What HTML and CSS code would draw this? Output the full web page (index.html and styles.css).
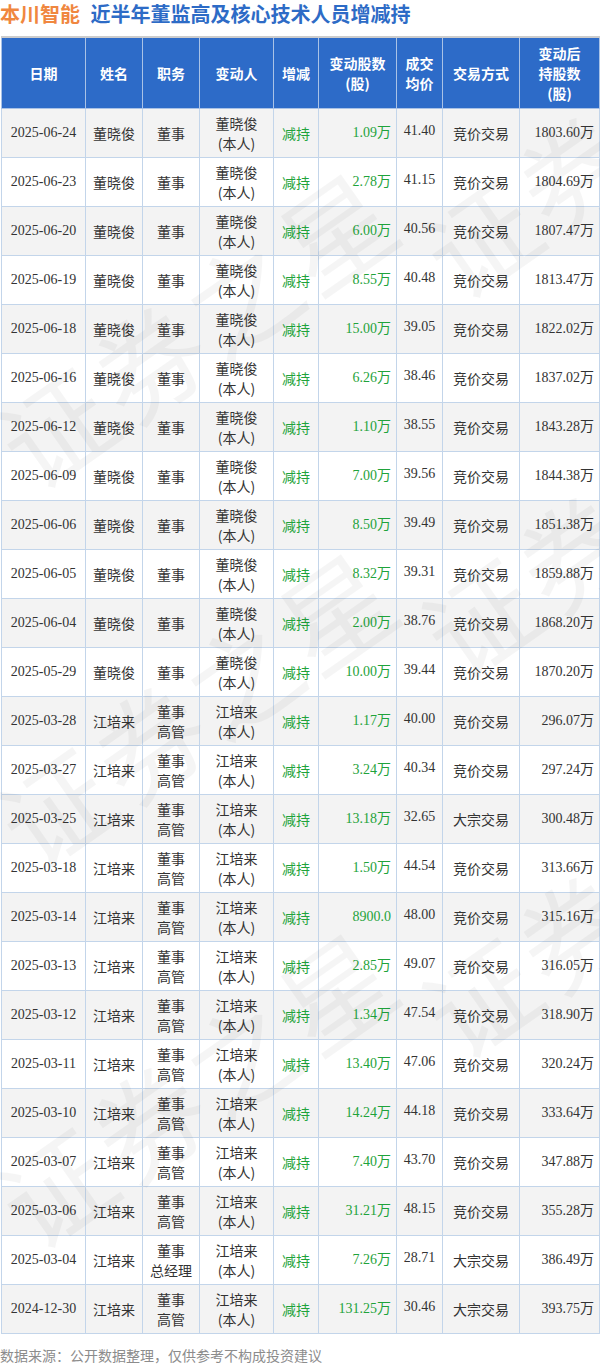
FILE: index.html
```html
<!DOCTYPE html>
<html lang="zh-CN">
<head>
    <meta charset="UTF-8">
    <meta name="viewport" content="width=device-width, initial-scale=1.0">
    <title>本川智能 近半年董监高及核心技术人员增减持</title>
    <link rel="stylesheet" href="styles.css">
</head>
<body>
    <div class="page">
        <div class="title">
            <span class="stock">本川智能</span>
            <span class="topic">近半年董监高及核心技术人员增减持</span>
        </div>

        <table class="trades">
            <colgroup>
                <col class="c-date">
                <col class="c-name">
                <col class="c-role">
                <col class="c-who">
                <col class="c-dir">
                <col class="c-qty">
                <col class="c-price">
                <col class="c-way">
                <col class="c-hold">
            </colgroup>
            <thead>
                <tr>
                    <th>日期</th>
                    <th>姓名</th>
                    <th>职务</th>
                    <th>变动人</th>
                    <th>增减</th>
                    <th>变动股数<br>(股)</th>
                    <th>成交<br>均价</th>
                    <th>交易方式</th>
                    <th>变动后<br>持股数<br>(股)</th>
                </tr>
            </thead>
            <tbody id="rows"></tbody>
        </table>

        <div class="source">数据来源：公开数据整理，仅供参考不构成投资建议</div>

        <!-- 水印 -->
        <div class="watermark">
            <span class="mark m1">证券之星</span>
            <span class="mark m2">证券之星</span>
            <span class="mark m3">证券之星</span>
            <span class="mark m4">证券之星</span>
            <span class="mark m5">证券之星</span>
            <span class="mark m6">证券之星</span>
        </div>
    </div>

    <script>
        // 日期, 姓名, 职务, 变动股数, 成交均价, 交易方式, 变动后持股数
        const data = [
            ['2025-06-24', '董晓俊', '董事', '1.09万', '41.40', '竞价交易', '1803.60万'],
            ['2025-06-23', '董晓俊', '董事', '2.78万', '41.15', '竞价交易', '1804.69万'],
            ['2025-06-20', '董晓俊', '董事', '6.00万', '40.56', '竞价交易', '1807.47万'],
            ['2025-06-19', '董晓俊', '董事', '8.55万', '40.48', '竞价交易', '1813.47万'],
            ['2025-06-18', '董晓俊', '董事', '15.00万', '39.05', '竞价交易', '1822.02万'],
            ['2025-06-16', '董晓俊', '董事', '6.26万', '38.46', '竞价交易', '1837.02万'],
            ['2025-06-12', '董晓俊', '董事', '1.10万', '38.55', '竞价交易', '1843.28万'],
            ['2025-06-09', '董晓俊', '董事', '7.00万', '39.56', '竞价交易', '1844.38万'],
            ['2025-06-06', '董晓俊', '董事', '8.50万', '39.49', '竞价交易', '1851.38万'],
            ['2025-06-05', '董晓俊', '董事', '8.32万', '39.31', '竞价交易', '1859.88万'],
            ['2025-06-04', '董晓俊', '董事', '2.00万', '38.76', '竞价交易', '1868.20万'],
            ['2025-05-29', '董晓俊', '董事', '10.00万', '39.44', '竞价交易', '1870.20万'],
            ['2025-03-28', '江培来', '董事<br>高管', '1.17万', '40.00', '竞价交易', '296.07万'],
            ['2025-03-27', '江培来', '董事<br>高管', '3.24万', '40.34', '竞价交易', '297.24万'],
            ['2025-03-25', '江培来', '董事<br>高管', '13.18万', '32.65', '大宗交易', '300.48万'],
            ['2025-03-18', '江培来', '董事<br>高管', '1.50万', '44.54', '竞价交易', '313.66万'],
            ['2025-03-14', '江培来', '董事<br>高管', '8900.0', '48.00', '竞价交易', '315.16万'],
            ['2025-03-13', '江培来', '董事<br>高管', '2.85万', '49.07', '竞价交易', '316.05万'],
            ['2025-03-12', '江培来', '董事<br>高管', '1.34万', '47.54', '竞价交易', '318.90万'],
            ['2025-03-11', '江培来', '董事<br>高管', '13.40万', '47.06', '竞价交易', '320.24万'],
            ['2025-03-10', '江培来', '董事<br>高管', '14.24万', '44.18', '竞价交易', '333.64万'],
            ['2025-03-07', '江培来', '董事<br>高管', '7.40万', '43.70', '竞价交易', '347.88万'],
            ['2025-03-06', '江培来', '董事<br>高管', '31.21万', '48.15', '竞价交易', '355.28万'],
            ['2025-03-04', '江培来', '董事<br>总经理', '7.26万', '28.71', '大宗交易', '386.49万'],
            ['2024-12-30', '江培来', '董事<br>高管', '131.25万', '30.46', '大宗交易', '393.75万']
        ];

        const tbody = document.getElementById('rows');
        data.forEach(d => {
            const tr = document.createElement('tr');
            tr.innerHTML =
                '<td class="num">' + d[0] + '</td>' +
                '<td>' + d[1] + '</td>' +
                '<td>' + d[2] + '</td>' +
                '<td>' + d[1] + '<br>(本人)</td>' +
                '<td class="down">减持</td>' +
                '<td class="num qty down">' + d[3] + '</td>' +
                '<td class="num price">' + d[4] + '</td>' +
                '<td>' + d[5] + '</td>' +
                '<td class="num hold">' + d[6] + '</td>';
            tbody.appendChild(tr);
        });
    </script>
</body>
</html>
```

FILE: styles.css
```css
body {
    margin: 0;
    padding: 0;
    background-color: #ffffff;
    font-family: 'Liberation Serif', 'Noto Sans CJK SC', serif;
    color: #333333;
}

.page {
    position: relative;
    width: 600px;
    overflow: hidden;
}

.title {
    height: 36px;
    line-height: 28px;
    font-family: 'Noto Sans CJK SC', sans-serif;
    font-size: 20px;
    font-weight: bold;
    white-space: nowrap;
}

.title .stock {
    color: #f0873f; /* 股票名 橙色 */
}

.title .topic {
    color: #2d6bc6;
    margin-left: 6px;
}

.trades {
    width: 598px;
    margin: 0 1px;
    border-collapse: collapse;
    table-layout: fixed;
    border-top: 2px solid #cccccc;
    font-size: 14px;
}

.c-date { width: 84px; }
.c-name { width: 57px; }
.c-role { width: 57px; }
.c-who { width: 74px; }
.c-dir { width: 45px; }
.c-qty { width: 78px; }
.c-price { width: 46px; }
.c-way { width: 77px; }
.c-hold { width: 80px; }

.trades thead tr {
    height: 71px;
}

.trades tbody tr {
    height: 49px;
}

.trades th {
    padding: 0;
    background-color: #2d6bc8;
    color: #ffffff;
    font-family: 'Noto Sans CJK SC', sans-serif;
    font-weight: bold;
    line-height: 20px;
    border: 1px solid #a9c2e6;
    text-align: center;
}

.trades td {
    padding: 0;
    line-height: 20px;
    text-align: center;
    border: 1px solid #c3d5ea;
    font-family: 'Noto Sans CJK SC', sans-serif;
}

.trades tbody tr:nth-child(odd) td {
    background-color: #f3f3f3;
}

.trades td.num {
    font-family: 'Liberation Serif', 'Noto Sans CJK SC', serif;
}

.trades td.down {
    color: #1fa33b; /* 减持 绿色 */
}

.trades td.qty,
.trades td.hold {
    text-align: right;
    padding-right: 5px;
}

.trades td.price {
    padding-bottom: 4px;
}

.source {
    margin-top: 11px;
    font-family: 'Noto Sans CJK SC', sans-serif;
    font-size: 14px;
    line-height: 20px;
    color: #8c8c8c;
    white-space: nowrap;
}

/* 水印 */
.watermark {
    position: absolute;
    top: 0;
    left: 0;
    width: 600px;
    height: 100%;
    pointer-events: none;
}

.mark {
    position: absolute;
    width: 480px;
    margin-left: -240px;
    margin-top: -60px;
    font-family: 'Noto Sans CJK SC', sans-serif;
    font-size: 110px;
    line-height: 120px;
    letter-spacing: 4px;
    text-align: center;
    color: rgba(0, 0, 0, 0.04);
    transform: rotate(-35deg);
    white-space: nowrap;
}

.m1 { left: 195px; top: 325px; }
.m2 { left: 195px; top: 705px; }
.m3 { left: 195px; top: 1085px; }
.m4 { left: 620px; top: 135px; }
.m5 { left: 620px; top: 515px; }
.m6 { left: 620px; top: 895px; }
```
